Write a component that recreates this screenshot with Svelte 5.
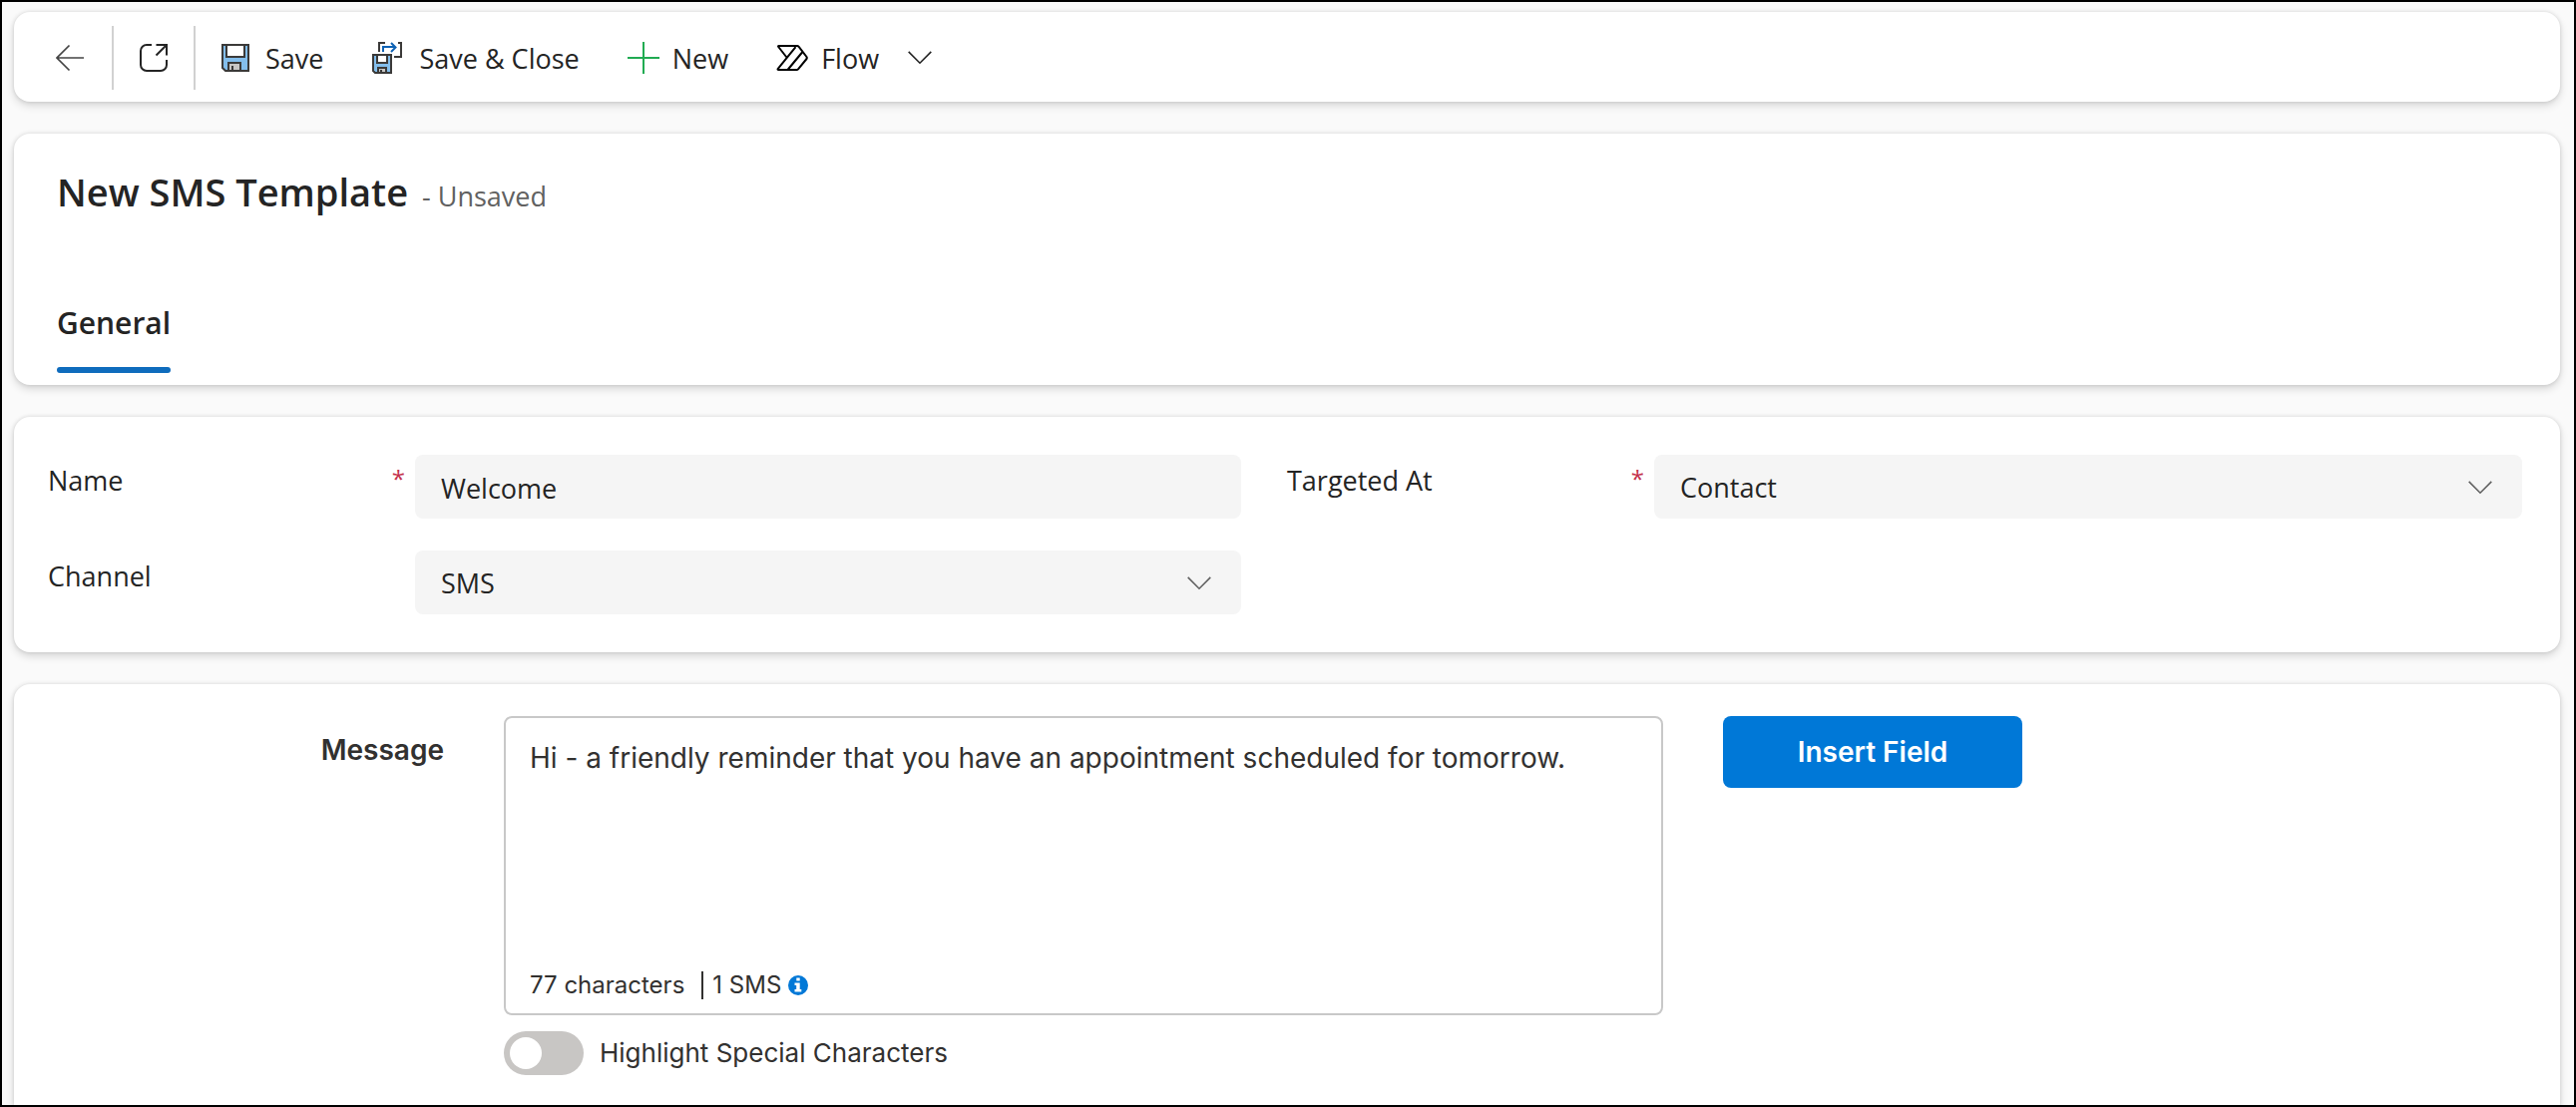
<script lang="ts">
	let name = $state('Welcome');
	let target = $state('Contact');
	let channel = $state('SMS');
	let message = $state('Hi - a friendly reminder that you have an appointment scheduled for tomorrow.');
	let highlight = $state(false);

	let characters = $derived(message.length);
	let parts = $derived(Math.max(1, Math.ceil(characters / 160)));
</script>

<svelte:head>
	<title>New SMS Template</title>
</svelte:head>

{#snippet chevron()}
	<svg class="chevron" width="24" height="14" viewBox="0 0 24 14" aria-hidden="true">
		<path d="M.7 .9 12 12.2 23.3 .9" fill="none" stroke="currentColor" stroke-width="1.6" />
	</svg>
{/snippet}

<div class="page">
	<div class="card toolbar" role="toolbar" aria-label="Commands">
		<button class="back" aria-label="Back">
			<svg width="28" height="28" viewBox="0 0 28 28">
				<path d="M28 14H1M13.5 1.5 1 14l12.5 12.5" fill="none" stroke="#444" stroke-width="1.7" />
			</svg>
		</button>
		<span class="separator"></span>
		<button class="popout" aria-label="Open in new window">
			<svg width="28" height="28" viewBox="0 0 28 28">
				<path
					d="M12 1H7a6 6 0 0 0-6 6v14a6 6 0 0 0 6 6h14a6 6 0 0 0 6-6v-5M16.500 1H27v10.500M27 1 16.500 11.500"
					fill="none"
					stroke="#242424"
					stroke-width="2"
				/>
			</svg>
		</button>
		<span class="separator"></span>
		<button class="save">
			<svg width="28" height="28" viewBox="0 0 28 28">
				<path d="M1 1h26v26H4l-3-3z" fill="#83beec" />
				<path d="M5 1h18v12H5z" fill="#fff" />
				<path d="M7 19h12v8H7z" fill="#c8c6c4" />
				<path
					d="M1 1h26v26H4l-3-3zM5 1v12h18V1M7 27v-8h12v8M11 22v5"
					fill="none"
					stroke="#3b3a39"
					stroke-width="2"
				/>
			</svg>
			<span class="caption">Save</span>
		</button>
		<button>
			<svg width="32" height="32" viewBox="0 0 32 32">
				<path d="M2 13h18v18H4l-2-2z" fill="#83beec" />
				<path d="M6 13h10v8H6z" fill="#fff" />
				<path d="M7 26h8v5H7z" fill="#c8c6c4" />
				<path
					d="M2 13h18v18H4l-2-2zM6 13v8h10v-8M7 31v-5h8v5M10 28v3M8 10V1h6M27 1h3v14h-7"
					fill="none"
					stroke="#3b3a39"
					stroke-width="2"
				/>
				<path d="M12 10V5h12M20 1l4.500 4.500L20 10" fill="none" stroke="#0f62b4" stroke-width="2" />
			</svg>
			<span class="caption">Save &amp; Close</span>
		</button>
		<button class="tight">
			<svg width="32" height="32" viewBox="0 0 32 32">
				<path d="M16 0v32M0 16h32" stroke="#21ab52" stroke-width="2" />
			</svg>
			<span class="caption">New</span>
		</button>
		<button class="tight">
			<svg width="32" height="28" viewBox="0 0 32 28">
				<path
					d="M1.500 2h19.500q1 0 1.700.8L30.500 13q.6 1 0 2L22 25.300q-.6.700-1.500.700H2.500q-1.500 0-.7-1.200L19.500 3.200M1.500 2l9 11.500M11.500 26 26 8.500"
					fill="none"
					stroke="#000"
					stroke-width="2"
					stroke-linejoin="round"
				/>
			</svg>
			<span class="caption">Flow</span>
			<span class="more">{@render chevron()}</span>
		</button>
	</div>

	<header class="card heading">
		<div class="title">
			<h1>New SMS Template</h1>
			<span class="status">- Unsaved</span>
		</div>
		<div class="tabs" role="tablist">
			<button class="tab" role="tab" aria-selected="true">General</button>
		</div>
	</header>

	<section class="card fields">
		<div class="field">
			<label for="name">Name <span class="required">*</span></label>
			<input id="name" class="control" type="text" bind:value={name} />
		</div>
		<div class="field">
			<label for="target">Targeted At <span class="required">*</span></label>
			<div class="select">
				<select id="target" class="control" bind:value={target}>
					<option>Contact</option>
					<option>Lead</option>
				</select>
				{@render chevron()}
			</div>
		</div>
		<div class="field">
			<label for="channel">Channel</label>
			<div class="select">
				<select id="channel" class="control" bind:value={channel}>
					<option>SMS</option>
				</select>
				{@render chevron()}
			</div>
		</div>
	</section>

	<section class="card message">
		<label class="message-label" for="message">Message</label>
		<div class="editor">
			<div class="box">
				<textarea id="message" bind:value={message}></textarea>
				<div class="counter">
					<span>{characters} characters</span>
					<span class="parts">{parts} SMS</span>
					<svg width="20" height="20" viewBox="0 0 20 20" aria-hidden="true">
						<circle cx="10" cy="10" r="10" fill="#0078d7" />
						<path d="M8.300 2.500h3.400v3H8.300zM6.500 7.500h5.200v6.500h1.600v2.500H6.500V14h1.700v-4H6.500z" fill="#fff" />
					</svg>
				</div>
			</div>
			<label class="toggle">
				<input type="checkbox" role="switch" bind:checked={highlight} />
				Highlight Special Characters
			</label>
		</div>
		<div>
			<button class="insert">Insert Field</button>
		</div>
	</section>
</div>

<style>
	:global(body) {
		background: #fafafa;
	}

	.page {
		box-sizing: border-box;
		min-height: 100vh;
		display: flex;
		flex-direction: column;
		gap: 32px;
		padding: 10px 14px 0 12px;
		border: 2px solid #000;
		font-family: 'Segoe UI', 'Open Sans', sans-serif;
		font-size: 27px;
		line-height: 36px;
		color: #242424;
	}

	.card {
		background: #fff;
		border-radius: 16px;
		box-shadow:
			0 0 4px rgba(0, 0, 0, 0.12),
			0 4px 8px rgba(0, 0, 0, 0.14);
	}

	button,
	input,
	select,
	textarea {
		box-sizing: border-box;
		margin: 0;
		border: none;
		font: inherit;
		color: inherit;
	}

	svg {
		display: block;
		flex: none;
	}

	/* Command bar */

	.toolbar {
		display: flex;
		padding: 14px 0 12px;
	}

	.toolbar button {
		display: flex;
		align-items: center;
		gap: 16px;
		height: 64px;
		padding: 0 24px;
		background: none;
		white-space: nowrap;
	}

	.toolbar .tight {
		gap: 13px;
	}

	.toolbar .back {
		padding: 0 28px 0 42px;
	}

	.toolbar .popout {
		padding: 0 26px;
	}

	.toolbar .save {
		padding-left: 26px;
	}

	.separator {
		width: 2px;
		background: #d1d1d1;
	}

	.caption {
		padding-top: 2px;
	}

	.more {
		margin-left: 16px;
	}

	/* Record heading */

	.heading {
		padding: 32px 44px 12px 43px;
	}

	.title {
		display: flex;
		align-items: baseline;
		gap: 14px;
	}

	h1 {
		margin: 0;
		font-size: 38px;
		line-height: 52px;
		font-weight: 600;
	}

	.status {
		color: #616161;
	}

	.tabs {
		display: flex;
		margin-top: 86px;
	}

	.tab {
		padding: 0;
		background: none;
		font-size: 30px;
		line-height: 40px;
		font-weight: 600;
	}

	.tab::after {
		content: '';
		display: block;
		height: 6px;
		margin-top: 24px;
		border-radius: 3px;
		background: #0f6cbd;
	}

	/* Form fields */

	.fields {
		display: grid;
		grid-template-columns: 1fr 1fr;
		row-gap: 32px;
		padding: 38px 0;
	}

	.field {
		display: grid;
		grid-template-columns: 368px 1fr;
		padding: 0 46px 0 34px;
	}

	.field:nth-child(even) {
		padding: 0 38px 0 0;
	}

	.field label {
		display: flex;
		justify-content: space-between;
		padding: 8px 10px 0 0;
	}

	.required {
		font-size: 24px;
		line-height: 32px;
		color: #c4314b;
	}

	.control {
		width: 100%;
		height: 64px;
		padding: 2px 26px 0;
		border-radius: 8px;
		background: #f5f5f5;
		appearance: none;
	}

	.select {
		display: grid;
		align-items: center;
	}

	.select > :global(*) {
		grid-area: 1 / 1;
	}

	.select .chevron {
		justify-self: end;
		margin: 2px 30px 0 0;
		color: #616161;
		pointer-events: none;
	}

	/* Message editor */

	.message {
		flex: 1;
		display: grid;
		grid-template-columns: 431fr 1162fr 839fr;
		align-items: start;
		column-gap: 60px;
		padding: 32px 0 30px;
		border-radius: 16px 16px 0 0;
		font-family: Inter, sans-serif;
		color: #323130;
	}

	.message-label {
		padding-top: 16px;
		font-size: 28px;
		font-weight: 600;
		text-align: right;
	}

	.box {
		display: flex;
		flex-direction: column;
		box-sizing: border-box;
		height: 300px;
		padding: 22px 24px 14px;
		border: 2px solid #c8c8c8;
		border-radius: 8px;
	}

	textarea {
		flex: 1;
		padding: 0;
		background: none;
		font-size: 28px;
		resize: none;
		outline: none;
	}

	.counter {
		display: flex;
		align-items: center;
		font-size: 24px;
		line-height: 28px;
	}

	.parts {
		margin: 0 7px 0 17px;
		padding-left: 9px;
		border-left: 2px solid #323130;
	}

	.toggle {
		display: flex;
		align-items: center;
		gap: 16px;
		margin-top: 16px;
		font-size: 26px;
	}

	.toggle input {
		width: 80px;
		height: 44px;
		padding: 6px;
		border-radius: 22px;
		background: #c8c6c4;
		appearance: none;
	}

	.toggle input::before {
		content: '';
		display: block;
		width: 32px;
		height: 32px;
		border-radius: 50%;
		background: #fff;
	}

	.toggle input:checked {
		background: #0078d7;
	}

	.toggle input:checked::before {
		margin-left: auto;
	}

	.insert {
		width: 300px;
		height: 72px;
		border-radius: 8px;
		background: #0078d7;
		font-size: 28px;
		font-weight: 600;
		color: #fff;
	}
</style>
